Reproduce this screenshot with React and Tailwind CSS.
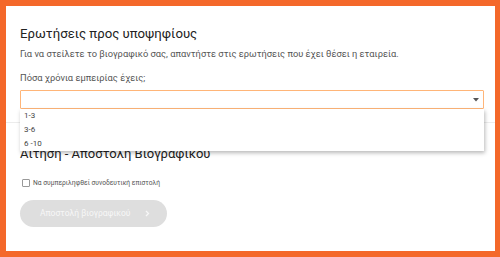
import React, { useState } from "react";

const experienceOptions = ["1-3", "3-6", "6 -10"];

const App = () => {
  const [coverLetter, setCoverLetter] = useState(false);

  return (
    <div
      className="h-[257px] w-[500px] bg-[#f4682a] pb-[6px] pl-[6px] pr-[5px] pt-[6px]"
      style={{ fontFamily: "Roboto, 'Noto Sans', sans-serif" }}
    >
      <div className="relative h-full w-full bg-white">
        {/* questions */}
        <div className="border-b border-[#ececec] pb-[13px] pl-[14px] pr-[11px] pt-[18px]">
          <h2 className="text-[13.2px] leading-[20px] text-[#222]">
            Ερωτήσεις προς υποψηφίους
          </h2>
          <p className="mt-[3px] text-[9.3px] leading-[14px] text-[#555]">
            Για να στείλετε το βιογραφικό σας, απαντήστε στις ερωτήσεις που
            έχει θέσει η εταιρεία.
          </p>
          <label className="mt-[10px] block text-[9.3px] leading-[14px] text-[#555]">
            Πόσα χρόνια εμπειρίας έχεις;
          </label>

          <div className="relative mt-[5px]">
            <div className="flex h-[19px] w-full items-center justify-end rounded-[1px] border border-[#ffb578] bg-white pr-[4px]">
              <svg width="6" height="4" viewBox="0 0 6 4">
                <path d="M0 0h6L3 3.5z" fill="#555" />
              </svg>
            </div>
            <ul className="absolute left-0 right-0 top-full z-10 bg-white shadow-[1px_2px_4px_rgba(0,0,0,0.28)]">
              {experienceOptions.map((opt) => (
                <li
                  key={opt}
                  className="px-[4px] text-[8px] leading-[14px] text-[#444]"
                >
                  {opt}
                </li>
              ))}
            </ul>
          </div>
        </div>

        {/* apply */}
        <div className="pl-[14px] pr-[11px] pt-[22px]">
          <h2 className="text-[13px] leading-[18px] text-[#222]">
            Αίτηση - Αποστολή Βιογραφικού
          </h2>

          <label className="mt-[15px] flex items-center gap-[3px]">
            <span
              onClick={() => setCoverLetter(!coverLetter)}
              className="ml-[2px] h-[8px] w-[8px] rounded-[1px] border border-[#999] bg-white"
            />
            <span className="text-[6.7px] leading-[10px] text-[#555]">
              Να συμπεριληφθεί συνοδευτική επιστολή
            </span>
          </label>

          <button
            type="button"
            disabled
            className="mt-[12px] flex h-[27px] w-[147px] items-center rounded-full bg-[#dedede] pl-[20px] text-[8.5px] text-[#f7f7f7]"
          >
            <span>Αποστολή βιογραφικού</span>
            <svg
              className="ml-[15px]"
              width="5"
              height="7"
              viewBox="0 0 5 7"
              fill="none"
            >
              <path d="M1 1l2.5 2.5L1 6" stroke="#f7f7f7" strokeWidth="1.3" />
            </svg>
          </button>
        </div>
      </div>
    </div>
  );
};

export default App;
